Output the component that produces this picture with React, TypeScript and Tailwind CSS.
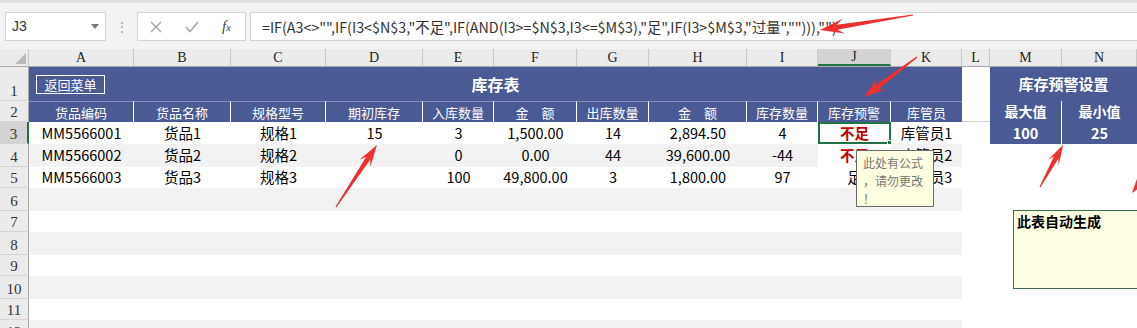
import React from "react";

// Column template shared by every sheet row (row header + A..N)
const cols =
  "grid grid-cols-[29px_105px_97px_95px_97px_71px_83px_72px_98px_71px_73px_71px_28px_72px_75px]";

const sans = "font-['Noto_Sans_CJK_SC','Noto_Sans',sans-serif]";

const letters = ["A", "B", "C", "D", "E", "F", "G", "H", "I", "J", "K", "L", "M", "N"];

const headers = ["货品编码", "货品名称", "规格型号", "期初库存", "入库数量", "金\u3000额", "出库数量", "金\u3000额", "库存数量", "库存预警", "库管员"];

const data = [
  ["MM5566001", "货品1", "规格1", "15", "3", "1,500.00", "14", "2,894.50", "4", "不足", "库管员1"],
  ["MM5566002", "货品2", "规格2", "", "0", "0.00", "44", "39,600.00", "-44", "不足", "库管员2"],
  ["MM5566003", "货品3", "规格3", "", "100", "49,800.00", "3", "1,800.00", "97", "足", "库管员3"],
];

// empty rows 6..12 with their heights
const emptyRows = [
  { n: 6, h: "h-[23px]" },
  { n: 7, h: "h-[21px]" },
  { n: 8, h: "h-[23px]" },
  { n: 9, h: "h-[21px]" },
  { n: 10, h: "h-[23px]" },
  { n: 11, h: "h-[21px]" },
  { n: 12, h: "h-[22px]" },
];
const dataH = ["h-[22px]", "h-[23px]", "h-[21px]"];

const RowNum = ({ n, active }: { n: number; active?: boolean }) => (
  <div
    className={`flex items-end justify-center pb-[1px] border-b border-[#d4d4d4] font-['Liberation_Serif',serif] text-[15px] leading-none text-[#333] ${
      active ? "bg-[#d3d3d3] border-r-2 border-r-[#217346]" : "bg-[#ebebeb] border-r border-r-[#a9a9a9]"
    }`}
  >
    {n}
  </div>
);

// Screenshot annotation arrow: thin tail widening into a notched head
function arrowPoints(x1: number, y1: number, x2: number, y2: number, head = 20, headW = 14, shaft = 5) {
  const dx = x2 - x1;
  const dy = y2 - y1;
  const len = Math.hypot(dx, dy);
  const ux = dx / len;
  const uy = dy / len;
  const nx = -uy;
  const ny = ux;
  const bx = x2 - ux * head;
  const by = y2 - uy * head;
  const sx = x2 - ux * head * 0.72;
  const sy = y2 - uy * head * 0.72;
  const p = [
    [x1 + nx * 0.6, y1 + ny * 0.6],
    [sx + (nx * shaft) / 2, sy + (ny * shaft) / 2],
    [bx + (nx * headW) / 2, by + (ny * headW) / 2],
    [x2, y2],
    [bx - (nx * headW) / 2, by - (ny * headW) / 2],
    [sx - (nx * shaft) / 2, sy - (ny * shaft) / 2],
    [x1 - nx * 0.6, y1 - ny * 0.6],
  ];
  return p.map(([a, b]) => `${a.toFixed(1)},${b.toFixed(1)}`).join(" ");
}

const arrows = [
  { t: [913, 15], h: [820, 30], head: 24, w: 15 },
  { t: [917, 57], h: [864, 97], head: 22, w: 14 },
  { t: [336, 207], h: [377, 145], head: 22, w: 13 },
  { t: [1040, 187], h: [1063, 145], head: 20, w: 12 },
  { t: [1165, 150], h: [1132, 193], head: 20, w: 13 },
];

const FormulaBar = () => (
  <div className={`h-[49px] bg-[#f3f3f3] border-t-[3px] border-[#e2e2e2] ${sans}`}>
    <div className="flex items-stretch h-[29px] mt-[9px]">
      <div className="ml-[5px] w-[101px] bg-white border border-[#d2d2d2] flex items-center justify-between pl-[6px] pr-[6px]">
        <span className="text-[14px] text-[#333] font-['Liberation_Sans',sans-serif]">J3</span>
        <svg width="8" height="5" viewBox="0 0 8 5">
          <path d="M0 0 L8 0 L4 5 Z" fill="#777" />
        </svg>
      </div>
      <div className="w-[31px] flex items-center justify-center text-[#aaa] text-[14px]">⋮</div>
      <div className="w-[109px] bg-white border border-[#d2d2d2] flex items-center justify-between px-[12px]">
        <svg width="12" height="12" viewBox="0 0 12 12">
          <path d="M1 1 L11 11 M11 1 L1 11" stroke="#a5a5a5" strokeWidth="1.4" />
        </svg>
        <svg width="14" height="12" viewBox="0 0 14 12">
          <path d="M1 6 L5 10.5 L13 1" stroke="#a5a5a5" strokeWidth="1.5" fill="none" />
        </svg>
        <span className="font-['Liberation_Serif',serif] italic text-[15px] text-[#444] pr-[2px]">
          f<span className="text-[11px]">x</span>
        </span>
      </div>
      <div className="ml-[4px] flex-1 bg-white border border-r-0 border-[#d2d2d2] flex items-center pl-[11px] text-[14.3px] text-[#333] whitespace-nowrap">
        =IF(A3&lt;&gt;"",IF(I3&lt;$N$3,"不足",IF(AND(I3&gt;=$N$3,I3&lt;=$M$3),"足",IF(I3&gt;$M$3,"过量",""))),"")
      </div>
    </div>
  </div>
);

const ColumnHeader = () => (
  <div className={`${cols} h-[18px] bg-[#ebebeb] border-b border-[#a9a9a9] font-['Liberation_Serif',serif] text-[14px] text-[#222]`}>
    <div className="relative border-r border-[#c6c6c6]">
      <svg className="absolute right-[2px] bottom-[2px]" width="11" height="11" viewBox="0 0 11 11">
        <path d="M11 0 L11 11 L0 11 Z" fill="#b9b9b9" />
      </svg>
    </div>
    {letters.map((l) => (
      <div
        key={l}
        className={`flex items-center justify-center leading-none border-r border-[#c9c9c9] ${
          l === "J" ? "bg-[#d3d3d3] border-b-2 border-b-[#217346]" : ""
        }`}
      >
        {l}
      </div>
    ))}
  </div>
);

export default function App() {
  return (
    <div className={`relative w-[1137px] h-[328px] overflow-hidden bg-white ${sans}`}>
      <FormulaBar />
      <ColumnHeader />

      {/* Row 1: title band */}
      <div className={`${cols} h-[34px]`}>
        <RowNum n={1} />
        <div className="col-span-11 bg-[#4a5a94] relative flex items-center justify-center">
          <div className="absolute left-[7px] top-[8px] w-[69px] h-[19px] border border-white flex items-center justify-center text-white text-[13px] leading-none">
            返回菜单
          </div>
          <span className="text-white text-[16px] font-bold">库存表</span>
        </div>
        <div className="bg-white" />
        <div className="col-span-2 bg-[#4a5a94] flex items-center justify-center text-white text-[15px] font-bold">
          库存预警设置
        </div>
      </div>

      {/* Row 2: column titles */}
      <div className={`${cols} h-[21px] text-white text-[13px]`}>
        <RowNum n={2} />
        {headers.map((h, i) => (
          <div
            key={i}
            className={`bg-[#4a5a94] border-t border-t-[#8590bb] flex items-center justify-center whitespace-pre leading-none ${
              i < 10 ? "border-r border-r-white" : ""
            }`}
          >
            {h}
          </div>
        ))}
        <div className="bg-white border-b border-[#d4d4d4]" />
        <div className="bg-[#4a5a94] border-r border-white flex items-center justify-center font-bold text-[14px]">最大值</div>
        <div className="bg-[#4a5a94] flex items-center justify-center font-bold text-[14px]">最小值</div>
      </div>

      {/* Rows 3..5: data */}
      {data.map((row, r) => (
        <div key={r} className={`${cols} ${dataH[r]} text-[14.5px] text-black`}>
          <RowNum n={r + 3} active={r === 0} />
          {row.map((c, i) => {
            const warn = i === 9 && c === "不足";
            const stripe = r === 1 && i !== 9;
            const sel = r === 0 && i === 9;
            return (
              <div
                key={i}
                className={`relative flex items-center justify-center leading-none ${stripe ? "bg-[#f2f2f2]" : "bg-white"} ${
                  warn ? "text-[#c00000] font-bold" : ""
                } ${sel ? "border-2 border-[#217346]" : ""}`}
              >
                {c}
                {sel && <div className="absolute right-[-4px] bottom-[-4px] w-[6px] h-[6px] bg-[#217346] border border-white" />}
              </div>
            );
          })}
          <div className="bg-white" />
          {r === 0 ? (
            <>
              <div className="bg-[#4a5a94] border-r border-white flex items-center justify-center text-white font-bold">100</div>
              <div className="bg-[#4a5a94] flex items-center justify-center text-white font-bold">25</div>
            </>
          ) : (
            <>
              <div className="bg-white" />
              <div className="bg-white" />
            </>
          )}
        </div>
      ))}

      {/* Rows 6..12: empty striped rows */}
      {emptyRows.map((e) => (
        <div key={e.n} className={`${cols} ${e.h}`}>
          <RowNum n={e.n} />
          <div className={`col-span-11 ${e.n % 2 === 0 ? "bg-[#f2f2f2]" : "bg-white"}`} />
          <div className="col-span-3 bg-white" />
        </div>
      ))}

      {/* Cell comment on J3 */}
      <div className="absolute left-[856px] top-[150px] w-[78px] h-[57px] bg-[#ffffe1] border border-[#6d6d6d] pl-[6px] pt-[3px] text-[12px] leading-[18px] text-[#777]">
        <div>此处有公式</div>
        <div>，请勿更改</div>
        <div>！</div>
      </div>

      {/* Floating text box */}
      <div className="absolute left-[1013px] top-[210px] w-[140px] h-[79px] bg-[#ffffe3] border border-[#3f6f4a] pl-[3px] pt-[1px] text-[14px] font-bold text-black leading-[18px]">
        此表自动生成
      </div>

      {/* Annotation arrows */}
      <svg className="absolute inset-0 pointer-events-none" width="1137" height="328" viewBox="0 0 1137 328">
        {arrows.map((a, i) => (
          <polygon key={i} points={arrowPoints(a.t[0], a.t[1], a.h[0], a.h[1], a.head, a.w)} fill="#ee3030" />
        ))}
      </svg>
    </div>
  );
}
